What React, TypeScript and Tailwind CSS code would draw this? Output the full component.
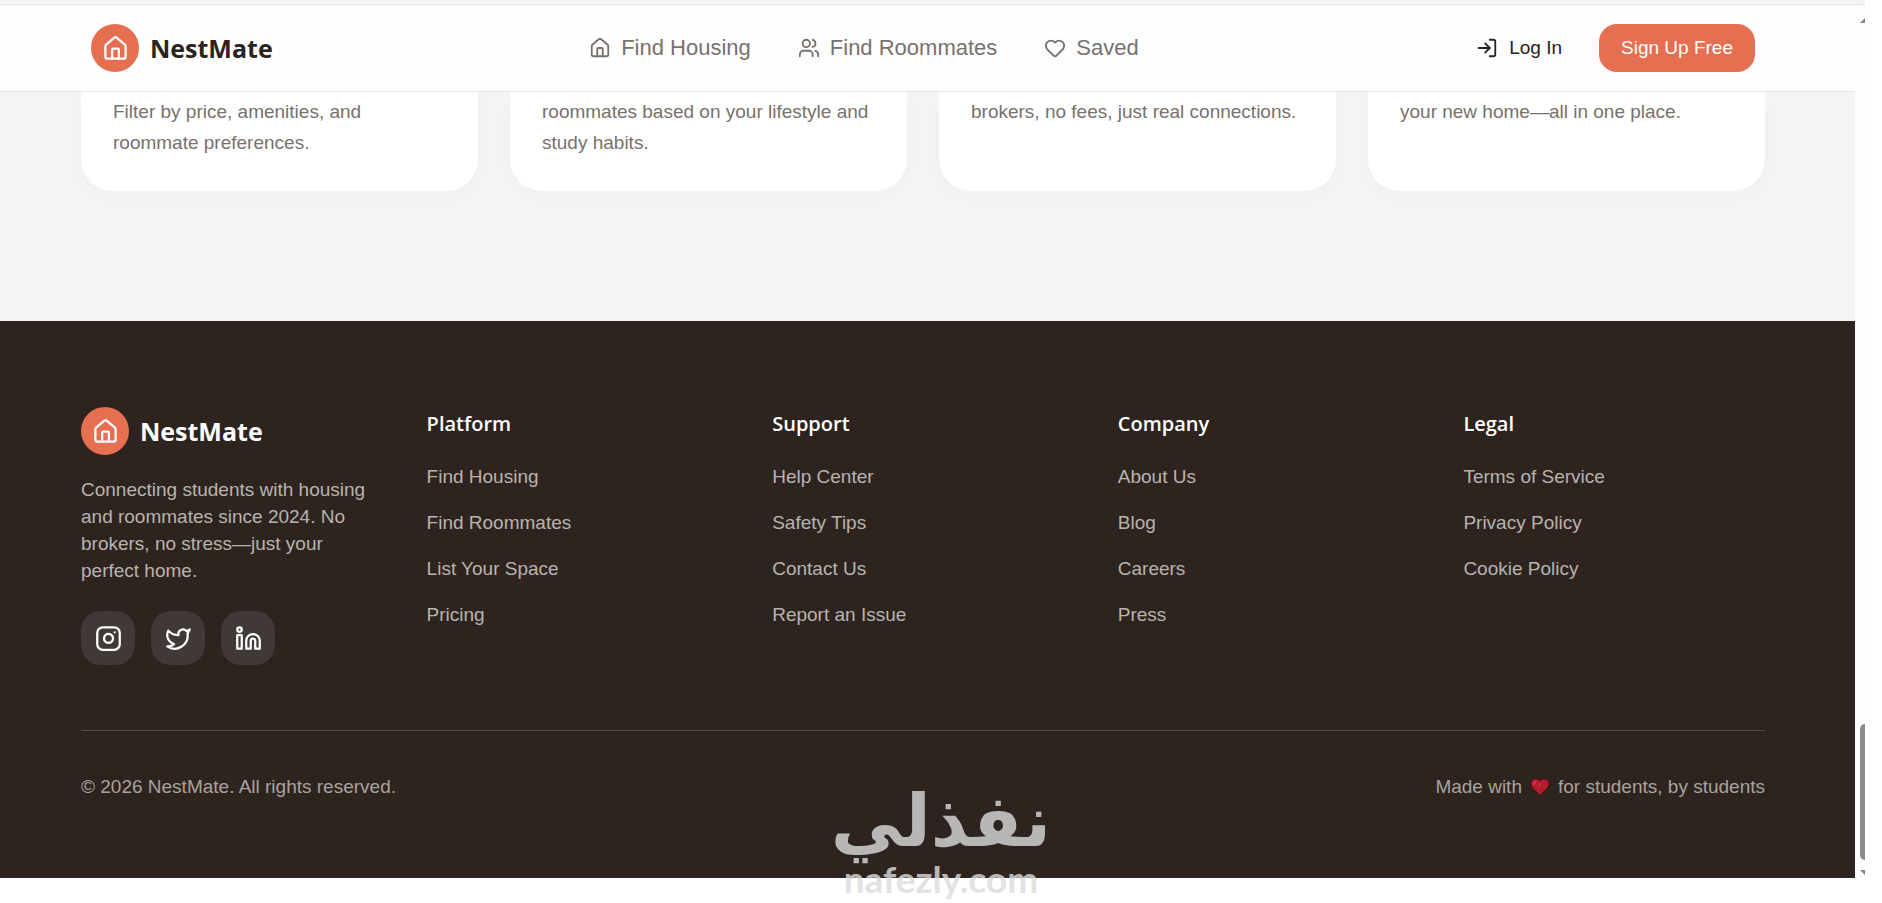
import type { ReactNode } from "react";
import { Heart, House, Instagram, Linkedin, LogIn, Twitter, Users } from "lucide-react";

const steps = [
  ["Filter by price, amenities, and", "roommate preferences."],
  ["roommates based on your lifestyle and", "study habits."],
  ["brokers, no fees, just real connections."],
  ["your new home—all in one place."],
];

const footerColumns = [
  { title: "Platform", links: ["Find Housing", "Find Roommates", "List Your Space", "Pricing"] },
  { title: "Support", links: ["Help Center", "Safety Tips", "Contact Us", "Report an Issue"] },
  { title: "Company", links: ["About Us", "Blog", "Careers", "Press"] },
  { title: "Legal", links: ["Terms of Service", "Privacy Policy", "Cookie Policy"] },
];

function Brand() {
  return (
    <a href="#" className="flex items-center gap-[11px]">
      <span className="flex size-12 items-center justify-center rounded-full bg-[#e76f51] text-white">
        <House size={27} />
      </span>
      <span className="font-['Open_Sans',sans-serif] text-[25px] leading-8 font-bold">NestMate</span>
    </a>
  );
}

function NavLink({ icon, children }: { icon: ReactNode; children: ReactNode }) {
  return (
    <a href="#" className="flex items-center gap-2.5">
      {icon}
      {children}
    </a>
  );
}

function SocialLink({ label, children }: { label: string; children: ReactNode }) {
  return (
    <a
      href="#"
      aria-label={label}
      className="flex size-[54px] items-center justify-center rounded-[20px] bg-[#413937] text-white"
    >
      {children}
    </a>
  );
}

function RedHeart() {
  return (
    <svg viewBox="0 0 20 18" className="mx-2 h-[18px] w-5" aria-hidden="true">
      <path
        d="M10 17.500C8 14.500 .8 10.800 .8 5.600 .8 2.700 2.800 .8 5.400 .8 7.400 .8 9.100 1.600 10 3 10.900 1.600 12.600 .8 14.600 .8 17.200 .8 19.200 2.700 19.200 5.600 19.200 10.800 12 14.500 10 17.500Z"
        fill="#b51c2c"
        stroke="#3d0d12"
        strokeWidth="1"
      />
      <path d="M4 6.500C4 4.800 4.800 3.800 6.300 3.600" fill="none" stroke="#d04a56" strokeWidth="1.400" strokeLinecap="round" />
      <path d="M10.500 5.500L8.500 9" stroke="#c93a49" strokeWidth="1.400" strokeLinecap="round" />
    </svg>
  );
}

function Header() {
  return (
    <header className="border-b border-[#e6e3df] bg-[#fefefe] pr-[100px] pl-[91px]">
      <div className="flex items-center justify-between py-[19px] text-[#292322]">
        <Brand />
        <nav className="flex items-center gap-[47px] text-[22px] leading-7 text-[#78716c]">
          <NavLink icon={<House size={22} />}>Find Housing</NavLink>
          <NavLink icon={<Users size={22} />}>Find Roommates</NavLink>
          <NavLink icon={<Heart size={22} />}>Saved</NavLink>
        </nav>
        <div className="flex items-center gap-4">
          <button className="flex h-12 items-center gap-[11px] px-[21px]">
            <LogIn size={22} />
            Log In
          </button>
          <button className="h-12 rounded-[18px] bg-[#e76f51] px-[22px] text-white">Sign Up Free</button>
        </div>
      </div>
    </header>
  );
}

function Steps() {
  return (
    <section className="overflow-hidden bg-[#f5f4f2] pr-[90px] pb-[130px] pl-[81px]">
      <div className="grid grid-cols-4 gap-8">
        {steps.map((lines) => (
          <article
            key={lines[0]}
            className="rounded-b-[32px] bg-white px-8 pt-1 pb-[33px] leading-[31px] text-[#78716c] shadow-[0_4px_24px_rgba(44,36,33,0.02)]"
          >
            {lines.map((line) => (
              <p key={line} className="whitespace-nowrap">
                {line}
              </p>
            ))}
          </article>
        ))}
      </div>
    </section>
  );
}

function Footer() {
  return (
    <footer className="bg-[#2d2420] pt-[86px] pr-[90px] pb-[78px] pl-[81px] leading-[27px] text-[#b9b3ae]">
      <div className="grid grid-cols-5 gap-11">
        <div>
          <div className="text-white">
            <Brand />
          </div>
          <p className="mt-[21px]">
            Connecting students with housing and roommates since 2024. No brokers, no stress—just your perfect home.
          </p>
          <div className="mt-[27px] flex gap-4">
            <SocialLink label="Instagram">
              <Instagram size={27} />
            </SocialLink>
            <SocialLink label="Twitter">
              <Twitter size={27} />
            </SocialLink>
            <SocialLink label="LinkedIn">
              <Linkedin size={27} />
            </SocialLink>
          </div>
        </div>
        {footerColumns.map((column) => (
          <div key={column.title}>
            <h3 className="font-['Open_Sans',sans-serif] text-xl leading-[34px] font-semibold text-white">
              {column.title}
            </h3>
            <ul className="mt-[22px] flex flex-col gap-[19px]">
              {column.links.map((link) => (
                <li key={link}>
                  <a href="#">{link}</a>
                </li>
              ))}
            </ul>
          </div>
        ))}
      </div>
      <div className="mt-[65px] flex items-center justify-between border-t border-[#564e4b] pt-[42px] text-[#a8a29e]">
        <p>© 2026 NestMate. All rights reserved.</p>
        <p className="flex items-center">
          Made with
          <RedHeart />
          for students, by students
        </p>
      </div>
    </footer>
  );
}

function Scrollbar() {
  return (
    <div className="flex w-2.5 flex-col items-end bg-[#fdfdfd] pt-[13px] pb-[3px]" aria-hidden="true">
      <svg viewBox="0 0 5 5" className="size-[5px]">
        <path d="M5 0V5H0Z" fill="#858585" />
      </svg>
      <div className="mt-auto h-[136px] w-[5px] rounded-l-full bg-[#8b8b8b]" />
      <svg viewBox="0 0 5 5" className="mt-2.5 size-[5px]">
        <path d="M0 0H5V5Z" fill="#858585" />
      </svg>
    </div>
  );
}

function Watermark() {
  return (
    <div className="pointer-events-none absolute inset-x-0 bottom-0 flex flex-col items-center pb-1 text-[#dcdcdc] opacity-80">
      <span
        lang="ar"
        dir="rtl"
        className="font-['DejaVu_Sans',sans-serif] text-[72px] leading-[76px] font-bold whitespace-nowrap"
      >
        نفذلي
      </span>
      <span className="font-['Lato',sans-serif] text-[37px] leading-10 font-bold">nafezly.com</span>
    </div>
  );
}

export default function App() {
  return (
    <div className="relative min-h-screen overflow-hidden bg-white font-['Liberation_Sans',Arial,sans-serif] text-[19px]">
      <div className="mr-[17px] h-[5px] border-b border-[#e4e4e4] bg-[#f5f5f5]" />
      <div className="mr-[17px] flex">
        <main className="min-w-0 flex-1">
          <Header />
          <Steps />
          <Footer />
        </main>
        <Scrollbar />
      </div>
      <Watermark />
    </div>
  );
}
